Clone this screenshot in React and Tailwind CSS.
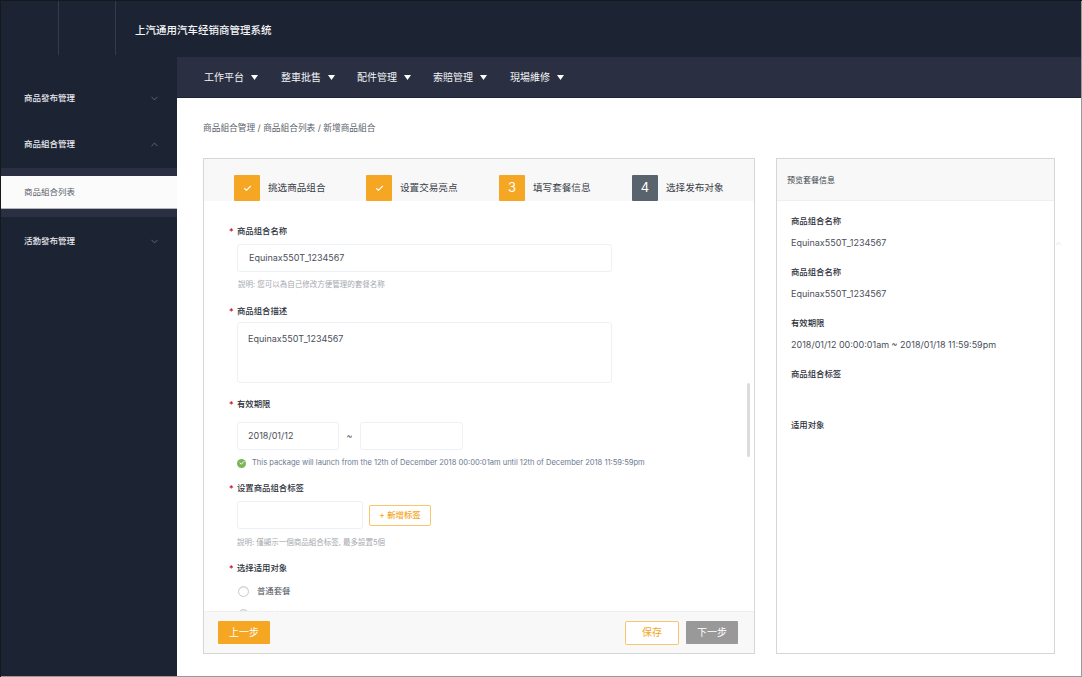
import { ChevronDown, ChevronUp, Check } from "lucide-react";

const font = "font-['Inter','Noto_Sans_CJK_SC',sans-serif]";

const Caret = () => (
  <svg width="7" height="5" viewBox="0 0 7 5" className="ml-[7px]">
    <path d="M0 0h7L3.5 5z" fill="#fff" />
  </svg>
);

const NavItem = ({ children, className }) => (
  <div className={"flex items-center text-[10px] text-[#f2f3f5] " + className}>
    {children}
    <Caret />
  </div>
);

const SideItem = ({ label, open, className }) => (
  <div className={"flex items-center justify-between pl-[23px] pr-[17px] h-3 text-[8.5px] font-medium text-[#e8eaee] " + className}>
    <span>{label}</span>
    {open ? (
      <ChevronUp size={11} strokeWidth={1} color="#aab0bc" />
    ) : (
      <ChevronDown size={11} strokeWidth={1} color="#aab0bc" />
    )}
  </div>
);

const Step = ({ done, num, gray, label, className }) => (
  <div className={"flex items-center self-end " + className}>
    <div
      className={
        "w-[26px] h-[26px] rounded-[1px] flex items-center justify-center text-white text-[13px] " +
        (gray ? "bg-[#59636d]" : "bg-[#f5a623]")
      }
    >
      {done ? <Check size={9} strokeWidth={3} /> : num}
    </div>
    <span className="ml-2 text-[9.6px] text-[#3a3f4a]">{label}</span>
  </div>
);

const Label = ({ children, className }) => (
  <div className={"flex items-center h-3 pl-[25px] text-[8.4px] font-medium text-[#2c303a] " + className}>
    <span className="w-2 text-[9px] leading-none text-[#d0021b]">*</span>
    {children}
  </div>
);

const Field = ({ children, className }) => (
  <div className={"border border-[#edf0f5] rounded-[3px] bg-white text-[9px] text-[#4a4f5a] " + className}>
    {children}
  </div>
);

const Radio = ({ label, className }) => (
  <div className={"flex items-center ml-[34px] " + className}>
    <span className="w-[11px] h-[11px] rounded-full border border-[#c9ccd2] bg-white shadow-[inset_0_1px_1px_#e5e5e5]" />
    <span className="ml-2 text-[8.4px] text-[#4a4f5a]">{label}</span>
  </div>
);

const PreviewTitle = ({ children, className }) => (
  <div className={"h-3 leading-3 text-[8.4px] font-medium text-[#2c303a] " + className}>{children}</div>
);

const PreviewValue = ({ children, className }) => (
  <div className={"h-3 leading-3 text-[9px] text-[#4a4f5a] " + className}>{children}</div>
);

export default function App() {
  return (
    <div className={"relative w-[1082px] h-[677px] overflow-hidden flex flex-col bg-white border-l border-t border-[#14181f] " + font}>
      <div className="absolute top-0 bottom-0 right-0 w-px bg-[#9a9a9a]" />
      <div className="absolute bottom-0 left-0 right-0 h-px bg-[#9a9a9a]" />

      <header className="h-[56px] shrink-0 bg-[#1c2333] flex">
        <div className="w-[58px] h-[54px] border-r border-[#333a4b]" />
        <div className="w-[57px] h-[54px] border-r border-[#333a4b]" />
        <div className="ml-[19px] self-center translate-y-[2px] text-[10.5px] font-medium text-[#f4f5f7]">
          上汽通用汽车经销商管理系统
        </div>
      </header>

      <div className="flex flex-1 min-h-0">
        <aside className="w-[176px] shrink-0 bg-[#1c2333] flex flex-col">
          <SideItem label="商品發布管理" className="mt-[35px]" />
          <SideItem label="商品組合管理" open className="mt-[34px]" />
          <div className="mt-[18px] h-[49px] py-2 bg-[#2a3042]">
            <div className="h-[33px] bg-[#fbfbfb] border-b border-[#b5b5b8] pl-[23px] flex items-center text-[8.5px] text-[#5a5f6a]">
              商品組合列表
            </div>
          </div>
          <SideItem label="活動發布管理" className="mt-[18px]" />
        </aside>

        <main className="flex-1 min-w-0 flex flex-col">
          <nav className="h-[41px] shrink-0 bg-[#2a3042] border-b border-[#1c2333] flex items-center pl-[27px]">
            <NavItem>工作平台</NavItem>
            <NavItem className="ml-[23px]">整車批售</NavItem>
            <NavItem className="ml-[22px]">配件管理</NavItem>
            <NavItem className="ml-[22px]">索賠管理</NavItem>
            <NavItem className="ml-[23px]">現場維修</NavItem>
          </nav>

          <div className="h-[60px] shrink-0 pl-[26px] pt-[24px] text-[8.7px] leading-3 text-[#5a5f6a]">
            商品組合管理 / 商品組合列表 / 新增商品組合
          </div>

          <div className="flex pl-[26px]">
            <section className="relative w-[552px] h-[496px] border border-[#d6d6d6] flex flex-col">
              <div className="h-[42px] shrink-0 bg-[#f8f8f8] flex pl-[30px]">
                <Step done label="挑选商品组合" className="w-[132px]" />
                <Step done label="设置交易亮点" className="w-[133px]" />
                <Step num="3" label="填写套餐信息" className="w-[133px]" />
                <Step num="4" gray label="选择发布对象" />
              </div>

              <div className="flex-1 min-h-0 overflow-hidden">
                <Label className="mt-[24px]">商品组合名称</Label>
                <Field className="mt-[7px] ml-[33px] w-[375px] h-[28px] flex items-center pl-[11px]">
                  Equinax550T_1234567
                </Field>
                <div className="mt-[7px] ml-[34px] h-3 leading-3 text-[7.5px] text-[#a5a8ae]">
                  說明: 您可以為自己修改方便管理的套餐名称
                </div>
                <Label className="mt-[14px]">商品组合描述</Label>
                <Field className="mt-[5px] ml-[33px] w-[375px] h-[61px] pl-[10px] pt-[10px] leading-3">
                  Equinax550T_1234567
                </Field>
                <Label className="mt-[15px]">有效期限</Label>
                <div className="mt-[12px] ml-[33px] flex items-center">
                  <Field className="w-[102px] h-[28px] flex items-center pl-[10px]">2018/01/12</Field>
                  <span className="w-[21px] text-center text-[9px] text-[#5a5f6a]">~</span>
                  <Field className="w-[103px] h-[28px]" />
                </div>
                <div className="mt-[7px] ml-[33px] h-3 flex items-center">
                  <span className="w-[9px] h-[9px] rounded-full bg-[#7cb55a] flex items-center justify-center text-white">
                    <Check size={6} strokeWidth={4} />
                  </span>
                  <span className="ml-[6px] text-[7.55px] text-[#6b7a90] whitespace-nowrap">
                    This package will launch from the 12th of December 2018 00:00:01am until 12th of December 2018 11:59:59pm
                  </span>
                </div>
                <Label className="mt-[13px]">设置商品组合标签</Label>
                <div className="mt-[7px] ml-[33px] flex items-center">
                  <Field className="w-[126px] h-[28px]" />
                  <div className="ml-[6px] w-[62px] h-[21px] rounded-[2px] border border-[#fbc56d] flex items-center justify-center text-[8.4px] font-medium text-[#f5a623]">
                    + 新增标签
                  </div>
                </div>
                <div className="mt-[8px] ml-[33px] h-3 leading-3 text-[7.5px] text-[#a5a8ae]">
                  說明: 僅顯示一個商品組合标签, 最多設置5個
                </div>
                <Label className="mt-[13px]">选择适用对象</Label>
                <Radio label="普通套餐" className="mt-[11px]" />
                <Radio label="会员套餐" className="mt-[11px]" />
              </div>

              <div className="h-[42px] shrink-0 bg-[#f8f8f8] border-t border-[#efefef] flex items-center pl-[14px] pr-[16px]">
                <button className="w-[52px] h-[23px] rounded-[1px] bg-[#f5a623] text-white text-[10px]">上一步</button>
                <button className="ml-auto w-[54px] h-[24px] rounded-[2px] border border-[#fbc56d] bg-white text-[#f5a623] text-[10px]">保存</button>
                <button className="ml-[7px] w-[52px] h-[23px] rounded-[1px] bg-[#999999] text-white text-[10px]">下一步</button>
              </div>

              <div className="absolute left-[543px] top-[224px] w-[3px] h-[74px] rounded-full bg-[#dcdcdc]" />
            </section>

            <section className="ml-[21px] w-[279px] h-[496px] border border-[#d6d6d6]">
              <div className="h-[42px] bg-[#f8f8f8] border-b border-[#efefef] pl-[10px] flex items-center text-[8px] text-[#3a3f4a]">
                预览套餐信息
              </div>
              <div className="pl-[14px] pt-[14px]">
                <PreviewTitle>商品组合名称</PreviewTitle>
                <PreviewValue className="mt-[10px]">Equinax550T_1234567</PreviewValue>
                <PreviewTitle className="mt-[17px]">商品组合名称</PreviewTitle>
                <PreviewValue className="mt-[10px]">Equinax550T_1234567</PreviewValue>
                <PreviewTitle className="mt-[17px]">有效期限</PreviewTitle>
                <PreviewValue className="mt-[10px]">2018/01/12 00:00:01am ~ 2018/01/18 11:59:59pm</PreviewValue>
                <PreviewTitle className="mt-[17px]">商品组合标签</PreviewTitle>
                <PreviewTitle className="mt-[39px]">适用对象</PreviewTitle>
              </div>
            </section>
            <ChevronUp size={9} strokeWidth={1} color="#bdbdbd" className="absolute left-[1053px] top-[238px]" />
          </div>
        </main>
      </div>
    </div>
  );
}
